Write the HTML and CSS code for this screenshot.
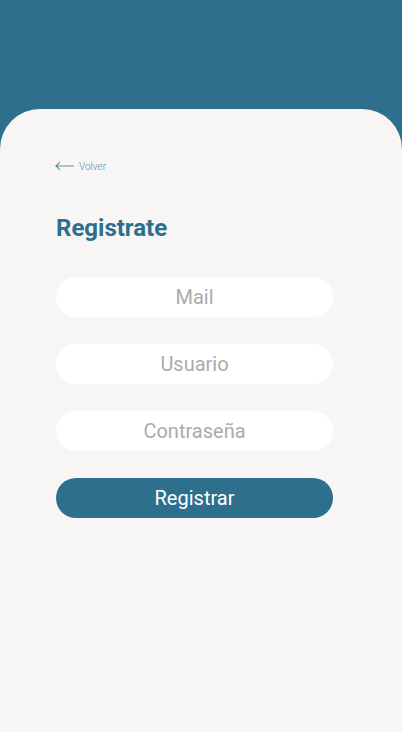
FILE: index.html
```html
<!DOCTYPE html>
<html lang="es">
<head>
    <meta charset="UTF-8">
    <meta name="viewport" content="width=device-width, initial-scale=1.0">
    <title>Registrate</title>
    <link rel="stylesheet" href="styles.css">
</head>
<body>
    <div class="header"></div>
    <div class="card">
        <a class="back" href="#">
            <svg width="19" height="8" viewBox="0 0 19 8">
                <path d="M1 4H18.5M4.5 0.6L1 4L4.5 7.4" fill="none" stroke="#5b8ea8" stroke-width="1.2" stroke-linecap="round" stroke-linejoin="round"/>
            </svg>
            <span>Volver</span>
        </a>
        <h1>Registrate</h1>
        <form class="form">
            <input type="email" placeholder="Mail">
            <input type="text" placeholder="Usuario">
            <input type="password" placeholder="Contraseña">
            <button type="button">Registrar</button>
        </form>
    </div>
</body>
</html>
```

FILE: styles.css
```css
html, body {
    margin: 0;
    height: 100%;
}
body {
    font-family: Roboto, "Liberation Sans", sans-serif;
    background-color: #2e6f8e;
    display: flex;
    flex-direction: column;
}
.header {
    height: 109px;
    flex-shrink: 0;
}
.card {
    flex: 1;
    background-color: #f7f6f4;
    border-radius: 40px 40px 0 0;
    padding: 51px 69px 0 56px;
}
.back {
    display: flex;
    align-items: center;
    gap: 5px;
    text-decoration: none;
    color: #5b8ea8;
    font-size: 10px;
    font-weight: 300;
    height: 12px;
    margin-left: -1px;
}
h1 {
    margin: 42px 0 0;
    color: #2e6f8e;
    font-size: 24px;
    font-weight: 700;
    line-height: 28px;
}
.form {
    display: flex;
    flex-direction: column;
    gap: 27px;
    margin-top: 35px;
}
input, button {
    height: 40px;
    border: none;
    border-radius: 20px;
    font-family: Roboto, "Liberation Sans", sans-serif;
    font-size: 20px;
    text-align: center;
    padding: 0;
    box-sizing: border-box;
    width: 100%;
}
input {
    background-color: #fff;
    color: #333;
    outline: none;
}
input::placeholder {
    color: #ababab;
}
button {
    background-color: #2e6f8e;
    color: #fff;
    cursor: pointer;
}
```
